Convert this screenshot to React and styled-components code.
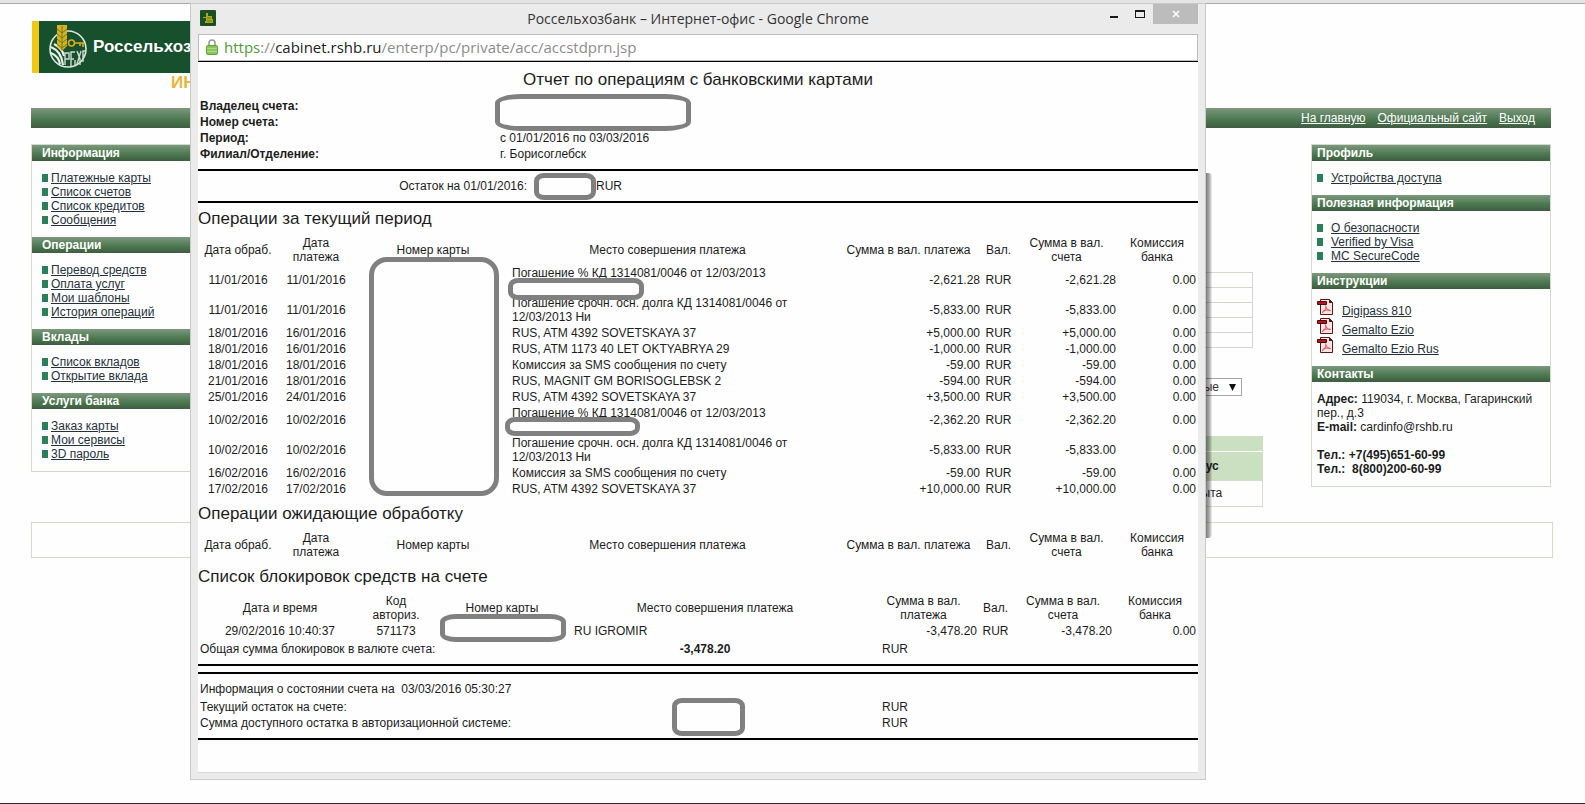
import React from "react";
import styled, { createGlobalStyle } from "styled-components";

const GlobalStyle = createGlobalStyle`
  body {
    margin: 0;
    background-color: #fefefe;
    color: #1c1c1c;
    font-family: "Liberation Sans", Arial, sans-serif;
    font-size: 12px;
    line-height: 14px;
  }
  * {
    box-sizing: border-box;
  }
`;

const Desktop = styled.div`
  position: relative;
  min-height: 100vh;
  border-top: 3px solid #e4e4e4;
  border-bottom: 1px solid #2b2b2b;
`;
const Page = styled.div`
  border-top: 1px solid #a9a9a9;
  padding: 17px 32px 20px 31px;
`;
const Banner = styled.div`
  display: flex;
  align-items: center;
  width: 300px;
  height: 52px;
  margin-left: 1px;
  padding-left: 10px;
  border-left: 7px solid #f2c811;
  background-color: #17502c;
`;
const BankName = styled.span`
  margin-left: 4px;
  color: #fff;
  font-size: 17px;
  font-weight: bold;
`;
const Slogan = styled.div`
  height: 35px;
  padding-left: 140px;
  color: #e6b73a;
  font-size: 17px;
  font-weight: bold;
  line-height: 19px;
`;
const Bar = styled.nav`
  display: flex;
  justify-content: flex-end;
  align-items: center;
  gap: 12px;
  height: 20px;
  margin-right: 2px;
  padding-right: 16px;
  background: linear-gradient(#7d987e, #4a774e 60%, #405c41);
`;
const BarLink = styled.a`
  color: #fff;
`;
const Columns = styled.div`
  display: flex;
  align-items: flex-start;
  margin: 16px 2px 15px 0;
`;
const SideBox = styled.aside`
  flex: none;
  width: ${({ $width }) => $width};
  border: 1px solid #cfdcc9;
`;
const SideTitle = styled.h2`
  margin: 0;
  padding: 0 ${({ $indent }) => $indent};
  height: 16px;
  background: linear-gradient(#7d987e, #4a774e 60%, #405c41);
  color: #fff;
  font-size: 12px;
  font-weight: bold;
  line-height: 16px;
`;
const SideList = styled.ul`
  margin: 0;
  padding: 10px ${({ $indent }) => $indent};
  list-style: none;
`;
const SideItem = styled.li`
  display: flex;
  align-items: ${({ $file }) => ($file ? "flex-end" : "center")};
  gap: ${({ $gap }) => $gap};
  height: ${({ $file }) => ($file ? "19px" : "14px")};
  svg {
    align-self: flex-start;
  }
`;
const Bullet = styled.span`
  width: 6px;
  height: 8px;
  background-color: #2a7f5b;
`;
const SideLink = styled.a`
  color: #24303a;
`;
const Address = styled.address`
  padding: 10px 5px;
  font-style: normal;
`;
const Main = styled.main`
  display: flex;
  flex: 1;
  flex-direction: column;
  align-items: flex-end;
  margin-right: 48px;
  padding-top: 128px;
`;
const InfoTable = styled.table`
  width: 60%;
  margin-right: 10px;
  border-collapse: collapse;
  td {
    height: 15px;
    padding: 0;
    border: 1px solid #d3d6cc;
  }
`;
const SelectWrap = styled.label`
  position: relative;
  margin: 30px 21px 40px 0;
  svg {
    position: absolute;
    top: 6px;
    right: 6px;
  }
`;
const Select = styled.select`
  display: block;
  width: 160px;
  height: 18px;
  padding: 0 22px 0 4px;
  appearance: none;
  border: 1px solid #a6a6a6;
  border-radius: 0;
  background-color: #fff;
  color: #333;
  font-family: inherit;
  font-size: 12px;
  text-align-last: right;
`;
const StatusTable = styled.table`
  width: 60%;
  border-collapse: collapse;
  text-align: center;
  caption {
    height: 15px;
    margin-bottom: 1px;
    background-color: #cbe0c1;
  }
  th {
    height: 28px;
    padding: 0;
    background-color: #cbe0c1;
  }
  td {
    height: 26px;
    padding: 0;
    border: 1px solid #d3dccb;
    border-left: 0;
  }
  th:last-child {
    width: 128px;
  }
`;
const FooterBox = styled.footer`
  height: 36px;
  border: 1px solid #d3dccb;
`;

const Window = styled.section`
  position: absolute;
  top: 0;
  left: 190px;
  right: 379px;
  padding: 0 7px 6px;
  border: 1px solid #c9c9c9;
  background-color: #ebebeb;
`;
const Shadow = styled.div`
  position: absolute;
  top: 169px;
  right: -7px;
  width: 6px;
  height: 365px;
  border-radius: 0 4px 4px 0;
  background: linear-gradient(
    to right,
    rgba(0, 0, 0, 0.5),
    rgba(0, 0, 0, 0.35) 50%,
    rgba(0, 0, 0, 0.05)
  );
`;
const TitleBar = styled.header`
  display: grid;
  grid-template-columns: 90px 1fr 90px;
  height: 30px;
`;
const Favicon = styled.div`
  padding: 6px 0 0 2px;
`;
const WindowTitle = styled.h1`
  margin: 0;
  color: #333;
  font-family: "Open Sans", "Noto Sans", sans-serif;
  font-size: 14px;
  font-weight: normal;
  line-height: 30px;
  text-align: center;
`;
const WindowButtons = styled.div`
  display: flex;
  justify-content: flex-end;
`;
const WindowButton = styled.button`
  flex: none;
  width: ${({ $close }) => ($close ? "45px" : "26px")};
  height: 20px;
  padding: 0;
  border: 0;
  background-color: ${({ $close }) => ($close ? "#bcbcbc" : "transparent")};
  svg {
    display: block;
    margin: auto;
  }
`;
const AddressBar = styled.div`
  display: flex;
  align-items: center;
  gap: 6px;
  height: 27px;
  padding: 0 0 2px 7px;
  border: 1px solid #bdbdbd;
  background-color: #fff;
`;
const Url = styled.span`
  color: #8c8c8c;
  font-family: "Open Sans", "Noto Sans", sans-serif;
  font-size: 15px;
  line-height: 22px;
`;
const Scheme = styled.span`
  color: #4f9a3c;
`;
const Host = styled.span`
  color: #222;
`;
const Report = styled.div`
  padding-bottom: 26px;
  border: 1px solid #d9d9d9;
  border-width: 0 0 1px;
  border-top: 1px solid #000;
  background-color: #fefefe;
`;
const ReportTitle = styled.h2`
  margin: 0;
  font-size: 17px;
  font-weight: normal;
  line-height: 35px;
  text-align: center;
`;
const SectionTitle = styled.h3`
  margin: 6px 0;
  font-size: 17px;
  font-weight: normal;
  line-height: 19px;
`;
const Rule = styled.hr`
  height: 2px;
  margin: 6px 0;
  border: 0;
  background-color: #000;
`;
const TableWrap = styled.div`
  position: relative;
`;
const Table = styled.table`
  width: 100%;
  table-layout: fixed;
  border-collapse: separate;
  border-spacing: 2px;
`;
const Col = styled.col`
  width: ${({ $width }) => $width};
`;
const Th = styled.th`
  height: 14px;
  padding: 0 ${({ $shift }) => ($shift ? "12px" : "0")} 0 0;
  font-weight: normal;
`;
const Td = styled.td`
  height: ${({ $lines }) => ($lines === 2 ? "28px" : "14px")};
  padding: 0;
  text-align: ${({ $align }) => $align || "left"};
  vertical-align: ${({ $top }) => ($top ? "top" : "middle")};
  white-space: ${({ $lines }) => ($lines ? "normal" : "nowrap")};
`;
const RowLabel = styled.th`
  height: 14px;
  padding: 0;
  font-weight: ${({ $bold }) => ($bold ? "bold" : "normal")};
  text-align: ${({ $align }) => $align || "left"};
  white-space: nowrap;
`;
const Note = styled.p`
  margin: 8px 2px 2px;
  white-space: pre-wrap;
`;
const Blank = styled.div`
  position: absolute;
  top: ${({ $top }) => $top};
  left: ${({ $left }) => $left};
  width: ${({ $width }) => $width};
  height: ${({ $height }) => $height};
  border: 5px solid #808080;
  border-radius: ${({ $radius }) => $radius || "10px / 8px"};
  background-color: #fefefe;
`;

const menu = [
  {
    title: "Информация",
    items: ["Платежные карты", "Список счетов", "Список кредитов", "Сообщения"],
  },
  {
    title: "Операции",
    items: [
      "Перевод средств",
      "Оплата услуг",
      "Мои шаблоны",
      "История операций",
    ],
  },
  { title: "Вклады", items: ["Список вкладов", "Открытие вклада"] },
  { title: "Услуги банка", items: ["Заказ карты", "Мои сервисы", "3D пароль"] },
];

const links = [
  { title: "Профиль", items: ["Устройства доступа"] },
  {
    title: "Полезная информация",
    items: ["О безопасности", "Verified by Visa", "MC SecureCode"],
  },
  {
    title: "Инструкции",
    file: true,
    items: ["Digipass 810", "Gemalto Ezio", "Gemalto Ezio Rus"],
  },
];

const interest = "Погашение % КД 1314081/0046 от 12/03/2013";
const principal = "Погашение срочн. осн. долга КД 1314081/0046 от 12/03/2013 Ни";
const sms = "Комиссия за SMS сообщения по счету";
const atm = "RUS, ATM 4392 SOVETSKAYA 37";

const operations = [
  ["11/01/2016", "11/01/2016", interest, "-2,621.28", 2],
  ["11/01/2016", "11/01/2016", principal, "-5,833.00", 2],
  ["18/01/2016", "16/01/2016", atm, "+5,000.00"],
  ["18/01/2016", "16/01/2016", "RUS, ATM 1173 40 LET OKTYABRYA 29", "-1,000.00"],
  ["18/01/2016", "18/01/2016", sms, "-59.00"],
  ["21/01/2016", "18/01/2016", "RUS, MAGNIT GM BORISOGLEBSK 2", "-594.00"],
  ["25/01/2016", "24/01/2016", atm, "+3,500.00"],
  ["10/02/2016", "10/02/2016", interest, "-2,362.20", 2],
  ["10/02/2016", "10/02/2016", principal, "-5,833.00", 2],
  ["16/02/2016", "16/02/2016", sms, "-59.00"],
  ["17/02/2016", "17/02/2016", atm, "+10,000.00"],
];

function Logo() {
  return (
    <svg width="40" height="44" viewBox="0 0 40 44" fill="none">
      <circle cx="19" cy="24" r="18" stroke="#dfe9e0" strokeWidth="1.6" />
      <path
        d="M2 22c7 3 11 8 12 18M2 28c5 2 8 6 9 11M5 19c6 3 9 7 10 12"
        stroke="#e8efe8"
        strokeWidth="2.2"
      />
      <path d="M8 0h10v21l-5 5-5-5z" fill="#d9b11f" />
      <path
        d="M8 4l5 4 5-4M8 9l5 4 5-4M8 14l5 4 5-4M8 19l5 4 5-4M13 1v24"
        stroke="#6b7d1c"
        strokeWidth="1"
      />
      <circle cx="22.5" cy="18" r="3" stroke="#d9b11f" strokeWidth="1.6" />
      <path d="M25 18h10M31 18v3M34 18v4" stroke="#d9b11f" strokeWidth="1.6" />
      <path
        d="M16 40V28h4v6h-4M22 41V27h4M22 34h3M26 41v-6M28 26l3 8v6M32 26l-4 13M34 37V26h3M34 31h2"
        stroke="#cfdcd0"
        strokeWidth="1.4"
      />
    </svg>
  );
}

function PdfIcon() {
  return (
    <svg width="16" height="16" viewBox="0 0 16 16">
      <path d="M3.500 .5h9l3 3v12h-12z" fill="#fae3e3" stroke="#5d1414" />
      <path d="M12 0v4h4z" fill="#5d1414" />
      <path d="M.5 2.500h9v3h-9z" fill="#b3161f" stroke="#4c0a0d" />
      <path
        d="M8.500 6.500c.5 3 2 5 5 5M9 8c0 2-2 5-4 6M5.500 12.500c2-1.500 5-2 8-1"
        fill="none"
        stroke="#d9535b"
      />
    </svg>
  );
}

function SideMenu({ groups, indent, gap }) {
  return groups.map(({ title, items, file }) => (
    <React.Fragment key={title}>
      <SideTitle $indent={indent}>{title}</SideTitle>
      <SideList $indent={indent}>
        {items.map((item) => (
          <SideItem key={item} $file={file} $gap={file ? "9px" : gap}>
            {file ? <PdfIcon /> : <Bullet />}
            <SideLink href="#">{item}</SideLink>
          </SideItem>
        ))}
      </SideList>
    </React.Fragment>
  ));
}

function OperationsHead() {
  return (
    <>
      <colgroup>
        <Col $width="76px" />
        <Col $width="76px" />
        <Col $width="154px" />
        <Col />
        <Col $width="143px" />
        <Col $width="33px" />
        <Col $width="99px" />
        <Col $width="78px" />
      </colgroup>
      <thead>
        <tr>
          <Th>Дата обраб.</Th>
          <Th>
            Дата
            <br />
            платежа
          </Th>
          <Th>Номер карты</Th>
          <Th $shift>Место совершения платежа</Th>
          <Th>Сумма в вал. платежа</Th>
          <Th>Вал.</Th>
          <Th>
            Сумма в вал.
            <br />
            счета
          </Th>
          <Th>
            Комиссия
            <br />
            банка
          </Th>
        </tr>
      </thead>
    </>
  );
}

function Totals() {
  return (
    <colgroup>
      <Col $width="328px" />
      <Col $width="350px" />
      <Col />
    </colgroup>
  );
}

function Statement() {
  return (
    <Report>
      <ReportTitle>Отчет по операциям с банковскими картами</ReportTitle>
      <TableWrap>
        <Table>
          <colgroup>
            <Col $width="298px" />
            <Col />
          </colgroup>
          <tbody>
            <tr>
              <RowLabel $bold>Владелец счета:</RowLabel>
              <Td />
            </tr>
            <tr>
              <RowLabel $bold>Номер счета:</RowLabel>
              <Td />
            </tr>
            <tr>
              <RowLabel $bold>Период:</RowLabel>
              <Td>с 01/01/2016 по 03/03/2016</Td>
            </tr>
            <tr>
              <RowLabel $bold>Филиал/Отделение:</RowLabel>
              <Td>г. Борисоглебск</Td>
            </tr>
          </tbody>
        </Table>
        <Blank
          $top="-3px"
          $left="297px"
          $width="196px"
          $height="37px"
          $radius="26px / 9px"
        />
      </TableWrap>
      <Rule />
      <TableWrap>
        <Table>
          <colgroup>
            <Col $width="327px" />
            <Col $width="65px" />
            <Col />
          </colgroup>
          <tbody>
            <tr>
              <RowLabel $align="right">Остаток на 01/01/2016:</RowLabel>
              <Td />
              <Td>RUR</Td>
            </tr>
          </tbody>
        </Table>
        <Blank $top="-4px" $left="336px" $width="62px" $height="27px" />
      </TableWrap>
      <Rule />

      <SectionTitle>Операции за текущий период</SectionTitle>
      <TableWrap>
        <Table>
          <OperationsHead />
          <tbody>
            {operations.map(([processed, paid, place, sum, lines], i) => (
              <tr key={i}>
                <Td $align="center">{processed}</Td>
                <Td $align="center">{paid}</Td>
                <Td />
                <Td $lines={lines} $top>
                  {place}
                </Td>
                <Td $align="right">{sum}</Td>
                <Td $align="center">RUR</Td>
                <Td $align="right">{sum}</Td>
                <Td $align="right">0.00</Td>
              </tr>
            ))}
          </tbody>
        </Table>
        <Blank
          $top="23px"
          $left="171px"
          $width="130px"
          $height="239px"
          $radius="18px"
        />
        <Blank $top="44px" $left="310px" $width="136px" $height="22px" />
        <Blank $top="183px" $left="307px" $width="135px" $height="19px" />
      </TableWrap>

      <SectionTitle>Операции ожидающие обработку</SectionTitle>
      <Table>
        <OperationsHead />
      </Table>

      <SectionTitle>Список блокировок средств на счете</SectionTitle>
      <TableWrap>
        <Table>
          <colgroup>
            <Col $width="160px" />
            <Col $width="68px" />
            <Col $width="140px" />
            <Col />
            <Col $width="107px" />
            <Col $width="33px" />
            <Col $width="98px" />
            <Col $width="82px" />
          </colgroup>
          <thead>
            <tr>
              <Th>Дата и время</Th>
              <Th>
                Код
                <br />
                авториз.
              </Th>
              <Th>Номер карты</Th>
              <Th $shift>Место совершения платежа</Th>
              <Th>
                Сумма в вал.
                <br />
                платежа
              </Th>
              <Th>Вал.</Th>
              <Th>
                Сумма в вал.
                <br />
                счета
              </Th>
              <Th>
                Комиссия
                <br />
                банка
              </Th>
            </tr>
          </thead>
          <tbody>
            <tr>
              <Td $align="center">29/02/2016 10:40:37</Td>
              <Td $align="center">571173</Td>
              <Td />
              <Td>RU IGROMIR</Td>
              <Td $align="right">-3,478.20</Td>
              <Td $align="center">RUR</Td>
              <Td $align="right">-3,478.20</Td>
              <Td $align="right">0.00</Td>
            </tr>
          </tbody>
        </Table>
        <Blank
          $top="22px"
          $left="242px"
          $width="126px"
          $height="28px"
          $radius="16px / 8px"
        />
      </TableWrap>
      <Table>
        <Totals />
        <tbody>
          <tr>
            <RowLabel>Общая сумма блокировок в валюте счета:</RowLabel>
            <Td $align="center">
              <b>-3,478.20</b>
            </Td>
            <Td>RUR</Td>
          </tr>
        </tbody>
      </Table>
      <Rule />
      <Rule />
      <Note>{"Информация о состоянии счета на  03/03/2016 05:30:27"}</Note>
      <TableWrap>
        <Table>
          <Totals />
          <tbody>
            <tr>
              <RowLabel>Текущий остаток на счете:</RowLabel>
              <Td />
              <Td>RUR</Td>
            </tr>
            <tr>
              <RowLabel>Сумма доступного остатка в авторизационной системе:</RowLabel>
              <Td />
              <Td>RUR</Td>
            </tr>
          </tbody>
        </Table>
        <Blank $top="0" $left="474px" $width="73px" $height="38px" />
      </TableWrap>
      <Rule />
    </Report>
  );
}

function App() {
  return (
    <Desktop>
      <GlobalStyle />
      <Page>
        <Banner>
          <Logo />
          <BankName>Россельхозбанк</BankName>
        </Banner>
        <Slogan>ИНТЕРНЕТ-ОФИС</Slogan>
        <Bar>
          <BarLink href="#">На главную</BarLink>
          <BarLink href="#">Официальный сайт</BarLink>
          <BarLink href="#">Выход</BarLink>
        </Bar>
        <Columns>
          <SideBox $width="232px">
            <SideMenu groups={menu} indent="10px" gap="3px" />
          </SideBox>
          <Main>
            <InfoTable>
              <tbody>
                {[1, 2, 3, 4, 5].map((row) => (
                  <tr key={row}>
                    <td />
                  </tr>
                ))}
              </tbody>
            </InfoTable>
            <SelectWrap>
              <Select aria-label="Карты" defaultValue="active">
                <option value="active">Активные</option>
              </Select>
              <svg width="7" height="7" viewBox="0 0 7 7">
                <path d="M0 0h7L3.500 7z" fill="#111" />
              </svg>
            </SelectWrap>
            <StatusTable>
              <caption />
              <thead>
                <tr>
                  <th />
                  <th>Статус</th>
                </tr>
              </thead>
              <tbody>
                <tr>
                  <td />
                  <td>Открыта</td>
                </tr>
              </tbody>
            </StatusTable>
          </Main>
          <SideBox $width="240px">
            <SideMenu groups={links} indent="5px" gap="8px" />
            <SideTitle $indent="5px">Контакты</SideTitle>
            <Address>
              <b>Адрес:</b> 119034, г. Москва, Гагаринский
              <br />
              пер., д.3
              <br />
              <b>E-mail:</b> cardinfo@rshb.ru
              <br />
              <br />
              <b>Тел.: +7(495)651-60-99</b>
              <br />
              <b>Тел.: &nbsp;8(800)200-60-99</b>
            </Address>
          </SideBox>
        </Columns>
        <FooterBox />
      </Page>

      <Window>
        <Shadow />
        <TitleBar>
          <Favicon>
            <svg width="16" height="16" viewBox="0 0 16 16">
              <rect width="16" height="16" rx="1" fill="#1d4d23" />
              <path
                d="M6 3h2v3h4v3h1v4H5v-2h1V8H3V7h3z"
                fill="#a9ab1c"
              />
              <path d="M7 8h4M7 11h5" stroke="#5f7a20" />
            </svg>
          </Favicon>
          <WindowTitle>
            Россельхозбанк – Интернет-офис - Google Chrome
          </WindowTitle>
          <WindowButtons>
            <WindowButton aria-label="Свернуть">
              <svg width="8" height="12" viewBox="0 0 8 12">
                <path d="M0 8h8v2H0z" fill="#1a1a1a" />
              </svg>
            </WindowButton>
            <WindowButton aria-label="Развернуть">
              <svg width="10" height="12" viewBox="0 0 10 12">
                <path d="M0 2h10v8H0zM1 4v5h8V4z" fill="#1a1a1a" fillRule="evenodd" />
              </svg>
            </WindowButton>
            <WindowButton $close aria-label="Закрыть">
              <svg width="8" height="8" viewBox="0 0 8 8">
                <path d="M1 1l6 6M7 1L1 7" stroke="#fff" strokeWidth="1.6" />
              </svg>
            </WindowButton>
          </WindowButtons>
        </TitleBar>
        <AddressBar>
          <svg width="12" height="16" viewBox="0 0 12 16">
            <path
              d="M3 8V4a3 3 0 0 1 6 0v4"
              fill="none"
              stroke="#9a9a9a"
              strokeWidth="1.6"
            />
            <rect x=".5" y="6.5" width="11" height="9" rx="1" fill="#8ac65a" stroke="#5f9e3a" />
            <path d="M1 9.500h10M1 12.500h10" stroke="#a9d985" />
          </svg>
          <Url>
            <Scheme>https</Scheme>://<Host>cabinet.rshb.ru</Host>
            /enterp/pc/private/acc/accstdprn.jsp
          </Url>
        </AddressBar>
        <Statement />
      </Window>
    </Desktop>
  );
}

export default App;
